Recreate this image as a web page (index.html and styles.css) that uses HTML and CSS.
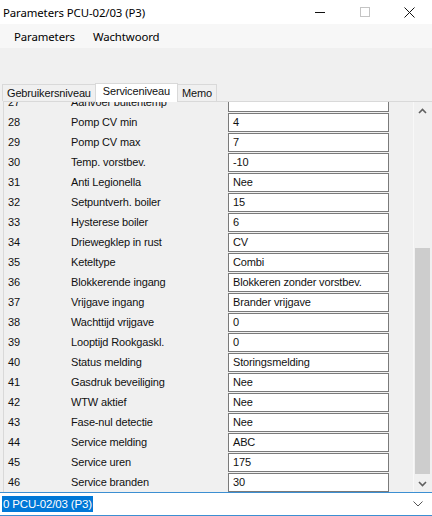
FILE: index.html
```html
<!DOCTYPE html>
<html lang="nl">
<head>
  <meta charset="UTF-8">
  <title>Parameters PCU-02/03 (P3)</title>
  <link rel="stylesheet" href="styles.css">
</head>
<body>
  <div class="window">
    <div class="titlebar">
      <span class="title">Parameters PCU-02/03 (P3)</span>
      <div class="caption-buttons">
        <span class="cap-btn">
          <svg width="10" height="10" viewBox="0 0 10 10"><line x1="0" y1="5.5" x2="10" y2="5.5" stroke="#111" stroke-width="1"/></svg>
        </span>
        <span class="cap-btn">
          <svg width="10" height="10" viewBox="0 0 10 10"><rect x="0.5" y="0.5" width="9" height="9" fill="none" stroke="#c4c4c4" stroke-width="1"/></svg>
        </span>
        <span class="cap-btn">
          <svg width="11" height="11" viewBox="0 0 11 11"><path d="M0.5 0.5 L10.5 10.5 M10.5 0.5 L0.5 10.5" stroke="#111" stroke-width="1"/></svg>
        </span>
      </div>
    </div>

    <div class="menubar">
      <span class="menu-item">Parameters</span>
      <span class="menu-item">Wachtwoord</span>
    </div>

    <div class="toolbar"></div>

    <div class="tabs">
      <span class="tab">Gebruikersniveau</span>
      <span class="tab active">Serviceniveau</span>
      <span class="tab">Memo</span>
    </div>

    <div class="panel">
      <div class="list" id="list"></div>
      <div class="scrollbar">
        <div class="sb-btn">
          <svg width="9" height="6" viewBox="0 0 9 6"><path d="M1 5 L4.5 1.5 L8 5" fill="none" stroke="#606060" stroke-width="1.6"/></svg>
        </div>
        <div class="sb-track">
          <div class="sb-thumb"></div>
        </div>
        <div class="sb-btn">
          <svg width="9" height="6" viewBox="0 0 9 6"><path d="M1 1 L4.5 4.5 L8 1" fill="none" stroke="#606060" stroke-width="1.6"/></svg>
        </div>
      </div>
    </div>

    <div class="combo">
      <span class="combo-text">0 PCU-02/03 (P3)</span>
      <svg class="combo-arrow" width="10" height="6" viewBox="0 0 10 6"><path d="M0.5 0.5 L5 5 L9.5 0.5" fill="none" stroke="#555" stroke-width="1"/></svg>
    </div>
  </div>

  <script>
    const params = [
      [27, "Aanvoer buitentemp", ""],
      [28, "Pomp CV min", "4"],
      [29, "Pomp CV max", "7"],
      [30, "Temp. vorstbev.", "-10"],
      [31, "Anti Legionella", "Nee"],
      [32, "Setpuntverh. boiler", "15"],
      [33, "Hysterese boiler", "6"],
      [34, "Driewegklep in rust", "CV"],
      [35, "Keteltype", "Combi"],
      [36, "Blokkerende ingang", "Blokkeren zonder vorstbev."],
      [37, "Vrijgave ingang", "Brander vrijgave"],
      [38, "Wachttijd vrijgave", "0"],
      [39, "Looptijd Rookgaskl.", "0"],
      [40, "Status melding", "Storingsmelding"],
      [41, "Gasdruk beveiliging", "Nee"],
      [42, "WTW aktief", "Nee"],
      [43, "Fase-nul detectie", "Nee"],
      [44, "Service melding", "ABC"],
      [45, "Service uren", "175"],
      [46, "Service branden", "30"]
    ];

    const list = document.getElementById("list");
    params.forEach(([nr, label, value]) => {
      const row = document.createElement("div");
      row.className = "row";
      row.innerHTML = `<span class="nr">${nr}</span><span class="label">${label}</span><span class="box">${value}</span>`;
      list.appendChild(row);
    });
  </script>
</body>
</html>
```

FILE: styles.css
```css
html, body {
  margin: 0;
  padding: 0;
}
body {
  width: 432px;
  height: 516px;
  overflow: hidden;
  background: #f0f0f0;
  font-family: "Liberation Sans", Arial, sans-serif;
  font-size: 11px;
  letter-spacing: -0.15px;
  color: #111;
}
.window {
  display: flex;
  flex-direction: column;
  height: 516px;
}
.titlebar {
  height: 24px;
  background: #fff;
  display: flex;
  align-items: center;
  justify-content: space-between;
}
.title {
  padding-left: 3px;
  font-family: "Noto Sans", sans-serif;
  font-size: 11.4px;
  letter-spacing: -0.1px;
  color: #000;
}
.caption-buttons {
  display: flex;
  height: 24px;
}
.cap-btn {
  width: 45px;
  display: flex;
  align-items: center;
  justify-content: center;
}
.menubar {
  height: 24px;
  background: #f7f7f7;
  display: flex;
  align-items: center;
  padding-left: 7px;
}
.menu-item {
  font-family: "Noto Sans", sans-serif;
  font-size: 11.4px;
  letter-spacing: -0.1px;
  color: #000;
  padding: 0 7px;
  margin-right: 4px;
}
.toolbar {
  height: 35px;
}
.tabs {
  height: 18px;
  display: flex;
  align-items: flex-end;
  padding-left: 2px;
  position: relative;
  z-index: 1;
}
.tab {
  height: 16px;
  line-height: 16px;
  padding: 0 4px 0 4px;
  border: 1px solid #d9d9d9;
  border-bottom: none;
  background: #f0f0f0;
}
.tab + .tab {
  margin-left: -1px;
}
.tab.active {
  height: 18px;
  line-height: 15px;
  background: #fff;
  padding: 0 7px;
  margin-bottom: -1px;
}
.panel {
  flex: 1;
  margin-left: 3px;
  border-top: 1px solid #d9d9d9;
  border-left: 1px solid #d9d9d9;
  display: flex;
  overflow: hidden;
}
.list {
  flex: 1;
  margin-top: -9px;
  padding-left: 4px;
}
.row {
  height: 20px;
  display: flex;
  align-items: flex-start;
}
.nr {
  width: 63px;
  line-height: 18px;
}
.label {
  width: 157px;
  line-height: 18px;
}
.box {
  width: 155px;
  height: 17px;
  line-height: 17px;
  padding-left: 4px;
  background: #fff;
  border: 1px solid #7a7a7a;
  white-space: nowrap;
  overflow: hidden;
}
.scrollbar {
  width: 17px;
  margin-right: 1px;
  display: flex;
  flex-direction: column;
  background: #f0f0f0;
  border-left: 1px solid #f8f8f8;
}
.sb-btn {
  height: 17px;
  display: flex;
  align-items: center;
  justify-content: center;
}
.sb-track {
  flex: 1;
  display: flex;
  flex-direction: column;
  justify-content: flex-end;
}
.sb-thumb {
  height: 226px;
  margin: 0 1px 1px 1px;
  background: #cdcdcd;
}
.combo {
  height: 22px;
  border-top: 1px solid #3c8fd2;
  border-bottom: 1px solid #3c8fd2;
  background: #fff;
  display: flex;
  align-items: center;
  justify-content: space-between;
  padding-left: 2px;
  padding-right: 9px;
}
.combo-text {
  background: #0078d7;
  color: #fff;
  font-size: 11.5px;
  line-height: 16px;
  padding: 0 1px;
}
```
